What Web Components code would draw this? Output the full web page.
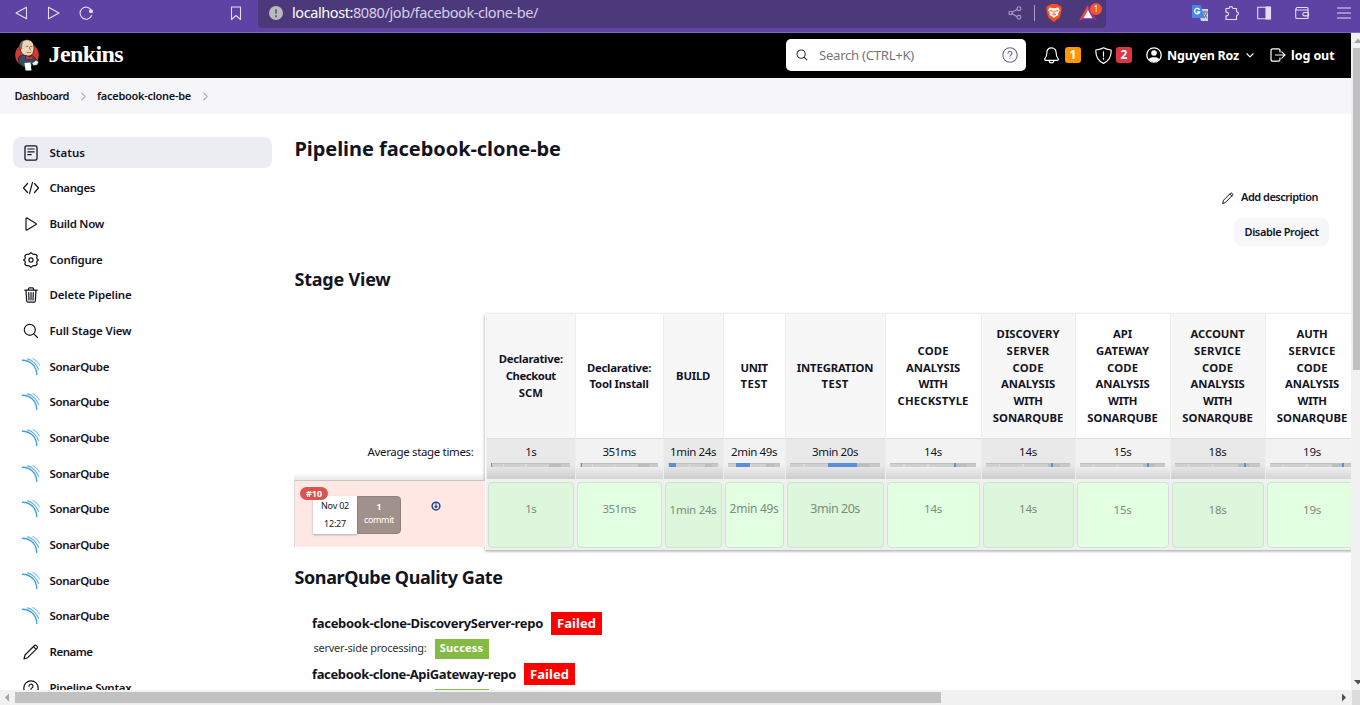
<!DOCTYPE html>
<html lang="en">
<head>
<meta charset="utf-8">
<title>facebook-clone-be [Jenkins]</title>
<style>
html,body{margin:0;height:705px;overflow:hidden;background:#fff}
body{font-family:"Noto Sans","Open Sans",sans-serif;color:#14141f}
</style>
</head>
<body>
<jenkins-window></jenkins-window>
<script>
const ICONS = {
  back:'<path d="M13.500 2.200v11.600L3 8z"/>',
  fwd:'<path d="M3.500 2.200v11.600L14 8z"/>',
  reload:'<path d="M13.600 10.500A6 6 0 1 1 13.300 5.200"/><circle cx="13" cy="6.200" r="1.500" fill="currentColor"/>',
  bookmark:'<path d="M3.500 2h9v12.500L8 10.500l-4.500 4z"/>',
  info:'<circle cx="8" cy="8" r="7" fill="#b9b9bf" stroke="none"/><path d="M8 5v3M8 11v.4" stroke="#6b6b76" stroke-width="2"/>',
  share:'<circle cx="3.500" cy="8" r="1.700"/><circle cx="12" cy="3.700" r="1.900"/><circle cx="12" cy="12.300" r="1.900"/><path d="M5 7.200l5-2.600M5 8.800l5 2.600"/>',
  brave:'<path d="M3 1.500 5 0h6l2 1.500 1.300-.1L16 4l-.7 1.600.3 1-1.800 7L8 18l-5.800-4.400-1.800-7 .3-1L0 4l1.700-2.600z" fill="#fb4e1c" stroke="none"/><path d="M3.500 3.500 8 4.200l4.500-.7 1.300 2.700-1.600 3 .3 1.700-2 1.200L8 14l-2.500-1.900-2-1.200.3-1.700-1.600-3z" fill="#fff" stroke="none"/><path d="M4 6.500l2.500.7M12 6.500l-2.500.7M8 7v2.500M6.300 10.200 8 11l1.700-.8" stroke="#fb4e1c" stroke-width="1"/>',
  bat:'<path d="M9 0 0 16l4.500-2.800L9 5z" fill="#f0503a" stroke="none"/><path d="M0 16h18l-4.500-2.800h-9z" fill="#6b2a9c" stroke="none"/><path d="M9 0v5l4.500 8.200L18 16z" fill="#a0308e" stroke="none"/><path d="M9 5l4.500 8.200h-9z" fill="#fff" stroke="none"/>',
  translate:'<path d="M6 4h10v12H9z" fill="#d6d9dc" stroke="none"/><path d="M0 0h8.500L13 13H0z" fill="#4a86e8" stroke="none"/><path d="M7.300 4.300A2.700 2.700 0 1 0 7.800 7H5.500" stroke="#fff" stroke-width="1.300"/><path d="M11 7h4.500M13 6v1M12 8l3 5M15 8l-2.500 5" stroke="#66727a" stroke-width="1"/>',
  puzzle:'<path d="M2 3.500h3a1.900 1.900 0 1 1 3.800 0h3.700v3.200a1.900 1.900 0 1 1 0 3.800v4H2v-3.700a1.900 1.900 0 1 0 0-3.600z"/>',
  panel:'<rect x="1.700" y="2.200" width="12.600" height="11.600"/><path d="M10 2h4.500v12H10z" fill="currentColor"/>',
  wallet:'<path d="M14 5V3.500a1 1 0 0 0-1-1H3A1.300 1.300 0 0 0 3 5h11v8.500H3a1.300 1.300 0 0 1-1.300-1.300V3.700M14.500 7.500h-4a1.700 1.700 0 0 0 0 3.400h4z"/>',
  menu:'<path d="M1.500 3h13M1.500 8h13M1.500 13h13"/>',
  search:'<circle cx="6.800" cy="6.800" r="5.500"/><path d="M10.800 10.800 14.500 14.500"/>',
  help:'<circle cx="8" cy="8" r="7.200"/><path d="M6 6.300a2 2 0 1 1 2.900 1.700c-.6.300-.9.700-.9 1.300"/><circle cx="8" cy="11.500" r=".6" fill="currentColor" stroke="none"/>',
  bell:'<path d="M8 .8c-3 0-4.400 2.200-4.400 4.800 0 3.300-.9 4.200-1.800 5.300-.5.700-.2 1.700.7 1.700h11c.9 0 1.200-1 .7-1.700-.9-1.100-1.800-2-1.800-5.300C12.400 3 11 .8 8 .8zM5.800 12.800a2.200 2.200 0 0 0 4.400 0"/>',
  shield:'<path d="M8 .8C5.800 2.200 3.400 2.600.8 2.800 .5 9 2.400 13 8 15.400 13.600 13 15.500 9 15.200 2.800 12.600 2.600 10.200 2.200 8 .8zM8 4.500v4.200M8 10.500v1"/>',
  user:'<circle cx="8" cy="8" r="7.200"/><circle cx="8" cy="6" r="2.800" fill="currentColor" stroke="none"/><path d="M2.800 12.300c1.200-2.600 9.200-2.600 10.400 0A7 7 0 0 1 8 15a7 7 0 0 1-5.200-2.700z" fill="currentColor" stroke="none"/>',
  down:'<path d="M3 6l5 5 5-5" stroke-width="1.800"/>',
  right:'<path d="M5 2l6 6-6 6" stroke-width="1.800"/>',
  logout:'<path d="M10 5V3.500A1.700 1.700 0 0 0 8.300 1.800H2.700A1.700 1.700 0 0 0 1 3.500v9a1.700 1.700 0 0 0 1.700 1.700h5.600A1.700 1.700 0 0 0 10 12.500V11M5.500 8h9.500M11.800 4.800 15 8l-3.200 3.200"/>',
  status:'<rect x="2" y=".8" width="12" height="14.400" rx="1.800" stroke-width="1.300"/><path d="M4.800 4h6.400M4.800 6.800h6.400M4.800 9.600h3.400"/>',
  code:'<path d="M4.500 3.500.5 8l4 4.500M11.500 3.500l4 4.500-4 4.500M9.500 2.300 6.500 13.700"/>',
  play:'<path d="M3 2.600v10.800c0 .6.500.8 1 .5l9-5.300c.5-.3.500-.9 0-1.200L4 2.100c-.5-.3-1-.1-1 .5z"/>',
  gear:'<path d="M6.200 2 8 .7 9.800 2l.6.400 2.300-.1 1.500 1.700-.5 1.700.2 1 1.500 1.300-1.500 1.300-.2 1 .5 1.700-1.500 1.700-2.300-.1-.6.400L8 15.300 6.200 14l-.6-.4-2.300.1L1.800 12l.5-1.700-.2-1L.6 8l1.500-1.300.2-1L1.800 4l1.500-1.700 2.300.1z"/><circle cx="8" cy="8" r="2.100"/>',
  trash:'<path d="M1.800 3.200h12.400M3 3.200l.7 10.900c0 .7.500 1.100 1.200 1.100h6.200c.7 0 1.200-.4 1.200-1.100L13 3.200M5.500 3V1.800c0-.5.300-.9.900-.9h3.200c.6 0 .9.400.9.900V3M8 5.500v7.500M5.700 5.500l.3 7.500M10.300 5.500 10 13" stroke-width="1.200"/>',
  pencil:'<path d="M1 15l1-4L11.500 1.500c1-1 3.800 1.200 2.700 2.700L4.700 13.700zM10.500 2.700l2.700 2.700"/>',
  sonar:'<path d="M0 2.200C8 2 14.500 8 14.800 16.600" stroke="#3f9fd9" stroke-width="1.400"/><path d="M5.500 .9C10 1.900 14.800 6.300 16.500 11.500" stroke="#62b1e1" stroke-width="1.100"/><path d="M11 .600C13.500 2 16 4.500 17.500 7" stroke="#86c4e9" stroke-width="1.100"/>',
  down2:'<circle cx="8" cy="8" r="6.200" stroke-width="2.400"/><path d="M8 4v6M6 8.500 8 10.500 10 8.500" stroke-width="1.800"/>',
  jenkins:'<circle cx="12" cy="16" r="11.800" fill="#d33833" stroke="none"/><path d="M3.500 20c0-3 2.500-4 5-4l8 1c3 1 5 3 5 5l-3 2-2.500 4H9c-3-1-5.500-4-5.500-8z" fill="#2f5268" stroke="#111" stroke-width=".6"/><path d="M5 9C4.500 4 7.500.700 12 .700S19 4 19 9c0 4-1.500 8-6 8S5.500 14 5 9z" fill="#f0d6b7" stroke="#111" stroke-width=".7"/><path d="M5 10.500C3.600 6.500 5 2.500 8.300 1.500 7 4 6.800 6 6.800 9.500z" fill="#77736e" stroke="#333" stroke-width=".4"/><path d="M11 7.300h1.800M15.300 7.300H17M12 13.300c1.500.8 3 .6 4-.3M14.500 8.500l.7 2.300" stroke="#5b4634" stroke-width=".7"/><path d="M11 16.500l3.500 1.500 3.500-1.500v4.500L14.500 20 11 21z" fill="#d33833" stroke="#111" stroke-width=".4"/><path d="M9.500 24l6-.5 1 8h-6z" fill="#fff" stroke="none"/><path d="M17 24l4.500-3 2 2-1 3-4 .5z" fill="#eee" stroke="#111" stroke-width=".5"/>'
};

class JkIcon extends HTMLElement{
  connectedCallback(){
    const s=+this.getAttribute('s')||16, h=+this.getAttribute('h')||s, n=this.getAttribute('name');
    const vb={jenkins:'0 0 24 32',brave:'0 0 16 18',bat:'0 0 18 16',sonar:'0 0 18 18'}[n]||'0 0 16 16';
    this.attachShadow({mode:'open'}).innerHTML=`<style>:host{display:block;flex:none;width:${s}px;height:${h}px}svg{display:block}</style>
    <svg width="${s}" height="${h}" viewBox="${vb}" fill="none" stroke="currentColor" stroke-width="${this.getAttribute('sw')||1.1}" stroke-linejoin="round" stroke-linecap="round">${ICONS[n]}</svg>`;
  }
}

/* One line of text whose tracking is adjusted to give a set width. */
class FitText extends HTMLElement{
  connectedCallback(){
    if(this.shadowRoot) return;
    this.attachShadow({mode:'open'}).innerHTML='<style>:host{display:inline-block;white-space:nowrap;flex:none}</style><slot></slot>';
    const w=+this.getAttribute('w'), nat=this.getBoundingClientRect().width, n=this.textContent.length;
    if(w&&nat){ this.style.letterSpacing=((w-nat)/n).toFixed(3)+'px'; }
  }
}

class BrowserBar extends HTMLElement{
  connectedCallback(){
    this.attachShadow({mode:'open'}).innerHTML=`<style>
    :host{display:flex;height:32px;flex:none;background:#5e43a4;border-bottom:1px solid #8068bd;color:#e4def3;align-items:flex-start}
    jk-icon{margin-top:5px}
    .url{display:flex;flex:none;width:848px;height:28px;margin-left:14px;background:#4b397c;border-radius:0 0 4px 4px;font-size:14.500px;line-height:25px;color:#d6d0e6}
    .url b{font-weight:400;color:#fff}
    .sep{width:1px;height:16px;margin:5px 0 0 11px;background:#aaa0c6}
    .bat{position:relative;margin-left:17px;width:18px}
    .n{position:absolute;left:11px;top:3px;width:12px;height:12px;border-radius:6px;background:#fb542b;color:#fff;font-size:8px;line-height:12px;text-align:center}
    </style>
    <jk-icon name="back" style="margin-left:13px"></jk-icon><jk-icon name="fwd" style="margin-left:16px"></jk-icon>
    <jk-icon name="reload" style="margin-left:17px"></jk-icon><jk-icon name="bookmark" style="margin-left:134px"></jk-icon>
    <div class="url"><jk-icon name="info" style="margin-left:10px"></jk-icon>
      <fit-text w="246" style="margin-left:8px"><b>localhost:</b>8080/job/facebook-clone-be/</fit-text>
      <jk-icon name="share" style="margin-left:469px;color:#a79ec5"></jk-icon><i class="sep"></i>
      <jk-icon name="brave" s="16" h="18" style="margin:4px 0 0 11px"></jk-icon>
      <div class="bat"><jk-icon name="bat" s="18" h="16"></jk-icon><span class="n">1</span></div></div>
    <jk-icon name="translate" style="margin-left:86px"></jk-icon><jk-icon name="puzzle" style="margin-left:16px"></jk-icon>
    <jk-icon name="panel" style="margin-left:16px"></jk-icon><jk-icon name="wallet" style="margin-left:22px"></jk-icon>
    <jk-icon name="menu" style="margin-left:26px"></jk-icon>`;
  }
}

class JenkinsHeader extends HTMLElement{
  connectedCallback(){
    this.attachShadow({mode:'open'}).innerHTML=`<style>
    :host{display:flex;height:45px;box-sizing:border-box;padding-bottom:1px;background:#000;color:#fff;align-items:center;font-size:12.500px;font-weight:700}
    .name{font:700 24px/30px "Liberation Serif",serif;margin:-2px 0 0 9.500px}
    .search{display:flex;align-items:center;width:240px;height:32px;margin-left:663px;border-radius:5px;background:#fff;color:#333;font-size:13.200px;font-weight:400;box-sizing:border-box;padding:0 8px 0 10px}
    .ph{margin-left:11px;flex:1;color:#757575}
    .badge{width:16px;height:16px;border-radius:3px;font-size:12px;line-height:16px;text-align:center}
    </style>
    <jk-icon name="jenkins" s="24" h="32" style="margin-left:15px"></jk-icon><fit-text class="name" w="74.500">Jenkins</fit-text>
    <div class="search"><jk-icon name="search" s="12" sw="1.400"></jk-icon><span class="ph"><fit-text w="95">Search (CTRL+K)</fit-text></span><jk-icon name="help" sw="1.1" style="color:#6a6a8c"></jk-icon></div>
    <jk-icon name="bell" s="17" style="margin-left:17px"></jk-icon><span class="badge" style="background:#ff9800;margin-left:5px">1</span>
    <jk-icon name="shield" s="17" style="margin-left:14px"></jk-icon><span class="badge" style="background:#dc3545;margin-left:4px">2</span>
    <jk-icon name="user" s="16" sw="1.300" style="margin-left:14px"></jk-icon><fit-text w="72" style="margin-left:5px">Nguyen Roz</fit-text>
    <jk-icon name="down" s="10" style="margin-left:6px"></jk-icon><jk-icon name="logout" s="16" sw="1.200" style="margin-left:15px"></jk-icon>
    <fit-text w="43.500" style="margin-left:5px">log out</fit-text>`;
  }
}

class BreadCrumbs extends HTMLElement{
  connectedCallback(){
    this.attachShadow({mode:'open'}).innerHTML=`<style>
    :host{display:flex;height:36px;box-sizing:border-box;padding:0 0 1px 14.500px;background:#f6f6f8;align-items:center;font-size:11px;font-weight:600}
    jk-icon{color:#9b9bab;margin:1px 9px 0 10px}</style>
    <fit-text w="54.500">Dashboard</fit-text><jk-icon name="right" s="9"></jk-icon><fit-text w="94">facebook-clone-be</fit-text><jk-icon name="right" s="9"></jk-icon>`;
  }
}

class SideTask extends HTMLElement{
  connectedCallback(){
    const a=k=>this.getAttribute(k), son=a('icon')==='sonar';
    this.attachShadow({mode:'open'}).innerHTML=`<style>
    :host{display:flex;flex:none;align-items:center;height:31px;width:259px;border-radius:8px;box-sizing:border-box;padding-left:${son?9:10}px;font-size:11.500px;font-weight:600;line-height:16px}
    :host([active]){background:#ecedf3}
    jk-icon{margin-right:${son?9.500:10.500}px}</style>
    <jk-icon name="${a('icon')}" s="${son?18:16}" sw="1.200"></jk-icon><fit-text w="${a('w')}">${a('label')}</fit-text>`;
  }
}

class SidePanel extends HTMLElement{
  connectedCallback(){
    const items=[['status','Status',35.5],['code','Changes',45.5],['play','Build Now',54.500],['gear','Configure',53],['trash','Delete Pipeline',82],['search','Full Stage View',82],
      ...Array(8).fill(['sonar','SonarQube',59.500]),['pencil','Rename',43],['help','Pipeline Syntax',82]];
    this.attachShadow({mode:'open'}).innerHTML=`<style>:host{display:flex;flex-direction:column;gap:4.672px;padding:23.150px 0 0 13px;width:281px;box-sizing:border-box;flex:none}</style>`+
      items.map(([i,l,w],n)=>`<side-task icon="${i}" label="${l}" w="${w}" ${n?'':'active'}></side-task>`).join('');
  }
}

class StageColumn extends HTMLElement{
  connectedCallback(){
    const d=JSON.parse(this.getAttribute('data'));
    this.attachShadow({mode:'open'}).innerHTML=`<style>
    :host{display:flex;flex-direction:column;flex:none;width:${d.w}px;box-sizing:border-box;border-left:1px solid #eeeef0;text-align:center}
    .head{height:124px;box-sizing:border-box;padding-top:.8px;display:flex;flex-direction:column;align-items:center;justify-content:center;background:${d.odd?'#fff':'#f7f7f7'};font-size:11.300px;font-weight:700;line-height:16.800px}
    .avg{height:41px;box-sizing:border-box;border-top:1px solid #dcdcdc;padding-top:5px;font-size:11.500px;line-height:16px;background:linear-gradient(transparent 65%,rgba(0,0,0,.12)),${d.odd?'#f2f2f2':'#e9e9e9'}}
    .bar{height:4px;margin:3px 5px 0 4px;background:linear-gradient(90deg,transparent 15%,#ddd 15% 17%,transparent 17% 43%,#ddd 43% 45%,transparent 45%),linear-gradient(90deg,#d0d0d0 74%,#bdbdbd 74% 88%,#c8c8c8 88%);display:flex;box-shadow:inset 0 1px #c0c0c0}
    .bar i{height:4px;margin-left:${d.b[0]}px;width:${d.b[1]}px;background:#5b8fdb}
    .cell{height:71px;box-sizing:border-box;padding:3px 0 2px;background:#ebf3eb}
    .box{height:66px;box-sizing:border-box;border:1px solid #d6ded8;border-radius:4px;margin:0 1px;background:${d.odd?'#e2ffe2':'#dcf7dc'};line-height:${d.dy?54:52}px;font-size:${d.fs||11.500}px;color:#7b8c7b}
    .box fit-text{margin:0 -4px}
    </style><div class="head">${d.h.map(([t,w])=>`<fit-text w="${w}">${t}</fit-text>`).join('')}</div>
    <div class="avg"><fit-text w="${d.t[1]}">${d.t[0]}</fit-text><div class="bar"><i></i></div></div>
    <div class="cell"><div class="box"><fit-text w="${d.cw||d.t[1]}">${d.t[0]}</fit-text></div></div>`;
  }
}

class StageView extends HTMLElement{
  connectedCallback(){
    const an=['ANALYSIS',54], wi=['WITH',29], co=['CODE',31], so=['SONARQUBE',70.500], se=['SERVICE',47];
    const cols=[
      {w:88.6,h:[['Declarative:',64],['Checkout',50],['SCM',24]],t:['1s',11],b:[0,1]},
      {w:88,h:[['Declarative:',64],['Tool Install',59]],t:['351ms',33],b:[1,1]},
      {w:60,h:[['BUILD',34]],t:['1min 24s',46],cw:47,b:[1,7],dy:1},
      {w:62,h:[['UNIT',27],['TEST',27]],t:['2min 49s',46],cw:49,fs:12,b:[8,14]},
      {w:100,h:[['INTEGRATION',76.500],['TEST',27]],t:['3min 20s',46],cw:49.500,fs:12.500,b:[38,29]},
      {w:96,h:[co,an,wi,['CHECKSTYLE',71]],t:['14s',18],b:[64,2]},
      {w:94,h:[['DISCOVERY',63],['SERVER',43],co,an,wi,so],t:['14s',18],b:[65,2]},
      {w:95,h:[['API',19],['GATEWAY',53],co,an,wi,so],t:['15s',18],b:[67,2],dy:1},
      {w:95,h:[['ACCOUNT',54],se,co,an,wi,so],t:['18s',18],b:[69,2],dy:1},
      {w:94,h:[['AUTH',31],se,co,an,wi,so],t:['19s',18],b:[72,2],dy:1}];
    this.attachShadow({mode:'open'}).innerHTML=`<style>
    :host{display:flex;height:236px}
    .left{width:191px;flex:none;display:flex;flex-direction:column}
    .lab{height:166px;box-sizing:border-box;padding:130px 11.500px 0 0;text-align:right;font-size:11.500px;line-height:16px;background:linear-gradient(transparent 159px,rgba(0,0,0,.09))}
    .run{height:67px;box-sizing:border-box;background:#ffe8e4;border-left:1px solid #ddd;border-top:1px solid #c9c5c5;display:flex;position:relative}
    .no{position:absolute;left:5px;top:6px;width:28px;height:13px;border-radius:7px;background:#d9534f;color:#fff;font-size:9px;font-weight:700;line-height:13px;text-align:center}
    .date,.com{width:44px;height:38px;margin-top:15px;text-align:center;box-sizing:border-box}
    .date{margin-left:18px;background:#fff;box-shadow:0 1px 2px #aaa;font-size:9px;line-height:18px;padding-top:1px}
    .com{background:#a1918d;border:1px solid #8f807d;border-radius:0 4px 4px 0;color:#fff;font-size:9px;line-height:13px;padding-top:3px}
    .com b{font-size:8.500px}
    jk-icon{margin:20px 0 0 30px;color:#204a87}
    .tbl{display:flex;flex:none;background:#fff;padding-left:1px;box-shadow:0 1px 3px rgba(0,0,0,.4)}
    </style><div class="left"><div class="lab"><fit-text w="106">Average stage times:</fit-text></div>
    <div class="run"><div class="date"><fit-text w="28">Nov 02</fit-text><br><fit-text w="22">12:27</fit-text></div>
    <div class="com"><b>1</b><br><fit-text w="30">commit</fit-text></div><jk-icon name="down2" s="10"></jk-icon><span class="no"><fit-text w="16">#10</fit-text></span></div></div>
    <div class="tbl"></div>`;
    const t=this.shadowRoot.querySelector('.tbl');
    cols.forEach((c,i)=>{c.odd=i%2;const e=document.createElement('stage-column');e.setAttribute('data',JSON.stringify(c));t.append(e)});
  }
}

class QualityGate extends HTMLElement{
  connectedCallback(){
    this.attachShadow({mode:'open'}).innerHTML=`<style>
    :host{display:block;padding-left:18px}
    .r{display:flex;align-items:center;gap:8px;font-weight:700;font-size:13px;line-height:18px}
    .r>fit-text{margin-top:-1px}
    .big{height:23px}.r.sm{height:20px;padding-left:1.500px;font-size:11px;font-weight:400;color:#333;margin:4px 0}
    .sm>fit-text{margin-top:-3px}
    .f,.s{color:#fff;font-weight:700;text-align:center}
    .f{background:#f00;width:51px;height:23px;line-height:22px}.s{background:#85bb43;width:54px;height:20px;line-height:18px;font-size:11px}
    .next{margin:4px 0 0 122.500px}
    </style>
    <div class="r big"><fit-text w="231">facebook-clone-DiscoveryServer-repo</fit-text><span class="f"><fit-text w="39">Failed</fit-text></span></div>
    <div class="r sm"><fit-text w="113">server-side processing:</fit-text><span class="s"><fit-text w="43.500">Success</fit-text></span></div>
    <div class="r big" style="height:22px"><fit-text w="204">facebook-clone-ApiGateway-repo</fit-text><span class="f" style="height:22px"><fit-text w="39">Failed</fit-text></span></div>
    <div class="s next"></div>`;
  }
}

class MainPanel extends HTMLElement{
  connectedCallback(){
    this.attachShadow({mode:'open'}).innerHTML=`<style>
    :host{display:block;flex:1;min-width:0;overflow:hidden;padding:23px 0 0 13px;font-size:11px;font-weight:400}
    h1,h2{margin:0;height:24px;line-height:24px;font-size:20px;font-weight:700}h2{font-size:18px}
    h1 fit-text,h2 fit-text{margin-left:.5px}
    .desc{display:flex;justify-content:flex-end;align-items:center;height:16px;line-height:16px;font-weight:600;margin:28px 33px 0 0;gap:7px}
    .act{display:flex;justify-content:flex-end;margin:13px 22px 0 0;font-weight:600}
    .btn{width:95px;height:28px;line-height:28px;border-radius:7px;background:#f7f7f9;text-align:center}
    </style><h1><fit-text w="266.500">Pipeline facebook-clone-be</fit-text></h1>
    <div class="desc"><jk-icon name="pencil" s="12" sw="1.300" style="margin-top:2px"></jk-icon><fit-text w="77">Add description</fit-text></div>
    <div class="act"><span class="btn"><fit-text w="74">Disable Project</fit-text></span></div>
    <h2 style="margin:21px 0 23px"><fit-text w="96">Stage View</fit-text></h2>
    <stage-view></stage-view>
    <h2 style="margin:15px 0 23px"><fit-text w="208">SonarQube Quality Gate</fit-text></h2>
    <quality-gate></quality-gate>`;
  }
}

class ScrollBar extends HTMLElement{
  connectedCallback(){
    const v=this.hasAttribute('vertical');
    this.attachShadow({mode:'open'}).innerHTML=`<style>
    :host{display:flex;background:#f1f1f1;box-sizing:border-box;${v?'flex-direction:column;width:9px;flex:none;align-items:flex-end':'height:15px;align-items:center'}}
    i{display:block;background:#c1c1c1}svg{display:block;flex:none}.sp{flex:1}
    </style>`+(v?`<svg width="7" height="15"><path d="M1 10 5 5.500 9 10z" fill="#a3a3a3"/></svg><i style="width:7px;height:322px"></i><span class="sp"></span><svg width="7" height="15"><path d="M1 5h8L5 9.500z" fill="#505050"/></svg>`
    :`<svg width="15" height="15"><path d="M9 3.500v8L5 7.500z" fill="#a3a3a3"/></svg><i style="width:926px;height:11px"></i><span class="sp"></span><svg width="23" height="15"><path d="M5 3.500v8l4-4z" fill="#505050"/><path d="M15 0h8v15h-8z" fill="#dcdcdc"/></svg>`);
  }
}

class JenkinsWindow extends HTMLElement{
  connectedCallback(){
    this.attachShadow({mode:'open'}).innerHTML=`<style>
    :host{display:flex;flex-direction:column;width:1360px;height:705px;overflow:hidden}
    .view{display:flex;height:657px}.page{width:1351px;height:657px;overflow:hidden}
    .cols{display:flex;height:576px;overflow:hidden}
    </style><browser-bar></browser-bar>
    <div class="view"><div class="page"><jenkins-header></jenkins-header><bread-crumbs></bread-crumbs>
    <div class="cols"><side-panel></side-panel><main-panel></main-panel></div></div><scroll-bar vertical></scroll-bar></div>
    <scroll-bar></scroll-bar>`;
  }
}
for(const [n,c] of [['jenkins-window',JenkinsWindow],['browser-bar',BrowserBar],['jenkins-header',JenkinsHeader],['bread-crumbs',BreadCrumbs],['side-panel',SidePanel],['side-task',SideTask],['main-panel',MainPanel],['stage-view',StageView],['stage-column',StageColumn],['quality-gate',QualityGate],['scroll-bar',ScrollBar],['jk-icon',JkIcon],['fit-text',FitText]]) customElements.define(n,c);
</script>
</body>
</html>
